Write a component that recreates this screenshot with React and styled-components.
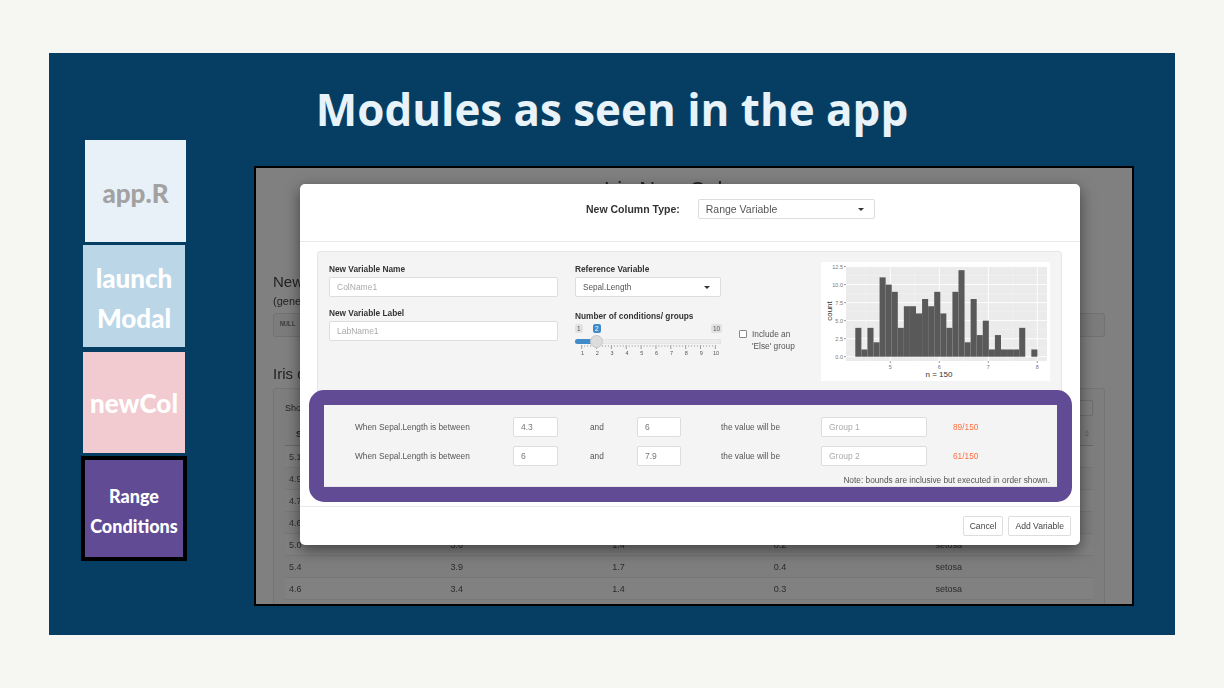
import React from "react";
import styled, { createGlobalStyle } from "styled-components";

const GlobalStyle = createGlobalStyle`
  html, body {
    margin: 0;
    padding: 0;
    background: #f6f7f2;
    font-family: "Liberation Sans", Arial, sans-serif;
  }
`;

// the first rows only show their first cell, the rest sits behind the modal
const tableRows = [
  ["5.1"],
  ["4.9"],
  ["4.7"],
  ["4.6"],
  ["5.0", "3.6", "1.4", "0.2", "setosa"],
  ["5.4", "3.9", "1.7", "0.4", "setosa"],
  ["4.6", "3.4", "1.4", "0.3", "setosa"],
];

const bins = [4, 1, 4, 2, 11, 10, 9, 4, 7, 7, 6, 8, 7, 9, 6, 4, 9, 12, 2, 8, 3, 5, 1, 3, 1, 1, 1, 4, 0, 1];

const Histogram = () => {
  const y0 = 94.7;
  const unit = 7.21;
  const binW = 6.07;
  const x5 = 69.3;
  const xUnit = 49;
  return (
    <svg width="229" height="119" viewBox="0 0 229 119">
      <rect width="229" height="119" fill="#fff" />
      <rect x="25" y="4.5" width="201" height="94.5" fill="#ebebeb" />
      {[1.25, 3.75, 6.25, 8.75, 11.25].map((v) => (
        <line key={v} x1="25" x2="226" y1={y0 - v * unit} y2={y0 - v * unit} stroke="#f3f3f3" strokeWidth="0.6" />
      ))}
      {[-0.5, 0.5, 1.5, 2.5].map((v) => (
        <line key={v} y1="4.5" y2="99" x1={x5 + v * xUnit} x2={x5 + v * xUnit} stroke="#f3f3f3" strokeWidth="0.6" />
      ))}
      {[0, 2.5, 5, 7.5, 10, 12.5].map((v) => (
        <g key={v}>
          <line x1="25" x2="226" y1={y0 - v * unit} y2={y0 - v * unit} stroke="#fff" strokeWidth="0.9" />
          <line x1="23" x2="25" y1={y0 - v * unit} y2={y0 - v * unit} stroke="#555" strokeWidth="0.6" />
          <text x="22" y={y0 - v * unit + 2} fontSize="5.5" fill="#777" textAnchor="end">
            {v.toFixed(1)}
          </text>
        </g>
      ))}
      {[0, 1, 2, 3].map((v) => (
        <g key={v}>
          <line y1="4.5" y2="99" x1={x5 + v * xUnit} x2={x5 + v * xUnit} stroke="#fff" strokeWidth="0.9" />
          <line y1="99" y2="101" x1={x5 + v * xUnit} x2={x5 + v * xUnit} stroke="#555" strokeWidth="0.6" />
          <text x={x5 + v * xUnit} y="107" fontSize="5.5" fill="#777" textAnchor="middle">
            {v + 5}
          </text>
        </g>
      ))}
      {bins.map((n, i) => (
        <rect key={i} x={34.3 + i * binW} y={y0 - n * unit} width={binW} height={n * unit} fill="#595959" />
      ))}
      <text x="118" y="115" fontSize="8" fill="#333" textAnchor="middle">
        n = 150
      </text>
      <text transform="translate(11 49) rotate(-90)" fontSize="8" fill="#333" textAnchor="middle">
        count
      </text>
    </svg>
  );
};

const SliderTicks = () => {
  const step = 14.85;
  return (
    <svg width="146" height="10" viewBox="0 0 146 10">
      {Array.from({ length: 46 }, (_, i) => {
        const major = i % 5 === 0;
        const x = 6.7 + (i * step) / 5;
        return <line key={i} x1={x} x2={x} y1="0" y2={major ? 4 : 2} stroke={major ? "#777" : "#aaa"} strokeWidth="0.7" />;
      })}
    </svg>
  );
};

const Slide = styled.div`
  box-sizing: border-box;
  width: 1126px;
  height: 582px;
  margin: 53px 0 0 49px;
  background: #053e62;
  overflow: hidden;
`;

const SlideTitle = styled.h1`
  height: 87px;
  margin: 0;
  padding-top: 26px;
  box-sizing: border-box;
  text-align: center;
  color: #e8f2f9;
  font: 700 43.9px/60px "Open Sans", sans-serif;
`;

const SlideBody = styled.div`
  display: flex;
  align-items: flex-start;
  padding-left: 32px;
  gap: 67px;
`;

const Sidebar = styled.div`
  display: flex;
  flex-direction: column;
  width: 106px;
`;

const Tile = styled.div`
  box-sizing: border-box;
  display: flex;
  flex-direction: column;
  justify-content: center;
  align-items: center;
  padding-top: ${(p) => p.$nudge || 0}px;
  width: ${(p) => p.$w}px;
  height: ${(p) => p.$h}px;
  margin-left: ${(p) => p.$left}px;
  margin-top: ${(p) => p.$top}px;
  background: ${(p) => p.$bg};
  color: ${(p) => p.$color || "#fff"};
  border: ${(p) => (p.$active ? "4px solid #000" : "none")};
  font: 900 ${(p) => p.$size || 26}px/${(p) => p.$line || 40}px Lato, sans-serif;
`;

const ShotWindow = styled.div`
  position: relative;
  box-sizing: border-box;
  flex: none;
  width: 880px;
  height: 440px;
  margin-top: 26px;
  border: 2px solid #000;
  overflow: hidden;
  background: #808080;
`;

const Shot = styled.div`
  position: relative;
  width: 100%;
  height: 100%;
  filter: blur(0.35px);
`;

const BackPage = styled.div`
  box-sizing: border-box;
  height: 100%;
  padding: 0 27px 0 17px;
  color: #222;
`;

const BackTitle = styled.div`
  height: 96px;
  padding: 9px 52px 0 0;
  box-sizing: border-box;
  text-align: center;
  font-size: 22px;
  line-height: 26px;
`;

const BackHeading = styled.div`
  font-size: 15px;
  line-height: 20px;
  margin-top: ${(p) => p.$top || 0}px;
`;

const BackNote = styled.div`
  font-size: 11px;
  line-height: 18px;
  margin-bottom: 3px;
`;

const NullBox = styled.div`
  box-sizing: border-box;
  height: 24px;
  padding: 0 6px;
  margin-bottom: 27px;
  background: #7c7c7c;
  border: 1px solid #727272;
  border-radius: 3px;
  font: 6.5px/22px "Liberation Mono", monospace;
`;

const TablePanel = styled.div`
  box-sizing: border-box;
  height: 240px;
  margin-top: 4px;
  padding: 11px 11px;
  background: #7e7e7e;
  border: 1px solid #747474;
  border-radius: 3px;
  font-size: 9px;
`;

const TableTop = styled.div`
  display: flex;
  justify-content: space-between;
  align-items: center;
  height: 16px;
`;

const SearchBox = styled.div`
  width: 80px;
  height: 16px;
  box-sizing: border-box;
  border: 1px solid #6e6e6e;
  border-radius: 2px;
  background: #808080;
`;

const TableHead = styled.div`
  display: flex;
  box-sizing: border-box;
  justify-content: space-between;
  align-items: center;
  height: 30px;
  padding: 6px 4px 0 11px;
  border-bottom: 1px solid #6a6a6a;
  font-weight: 700;
  color: #222;
`;

const SortIcon = styled.span`
  display: flex;
  flex-direction: column;
  gap: 1px;
  &::before,
  &::after {
    content: "";
    border-left: 2.5px solid transparent;
    border-right: 2.5px solid transparent;
  }
  &::before {
    border-bottom: 3px solid #6a6a6a;
  }
  &::after {
    border-top: 3px solid #6a6a6a;
  }
`;

const TableRow = styled.div`
  display: grid;
  grid-template-columns: repeat(5, 1fr);
  height: 22px;
  box-sizing: border-box;
  padding-top: 5px;
  line-height: 12px;
  border-bottom: 1px solid #777;
  background: ${(p) => (p.$odd ? "#818181" : "#7e7e7e")};
  color: #2c2c2c;
  span {
    padding-left: 4px;
  }
`;

const Modal = styled.div`
  position: absolute;
  left: 44px;
  top: 16px;
  width: 780px;
  height: 361px;
  display: flex;
  flex-direction: column;
  background: #fff;
  border-radius: 5px;
  box-shadow: 0 5px 15px rgba(0, 0, 0, 0.5);
  color: #333;
  font-size: 8.3px;
`;

const ModalHeader = styled.div`
  flex: none;
  box-sizing: border-box;
  height: 58px;
  padding: 15px 0 0 286px;
  display: flex;
  gap: 18px;
  align-items: flex-start;
  border-bottom: 1px solid #e8e8e8;
`;

const HeaderLabel = styled.div`
  font-size: 10.5px;
  font-weight: 700;
  line-height: 20px;
`;

const Select = styled.div`
  box-sizing: border-box;
  width: ${(p) => p.$w}px;
  height: 20px;
  display: flex;
  align-items: center;
  justify-content: space-between;
  padding: 0 10px 0 7px;
  background: #fff;
  border: 1px solid #ddd;
  border-radius: 2px;
  color: #555;
  font-size: ${(p) => p.$size || 8.2}px;
  &::after {
    content: "";
    border-left: 3px solid transparent;
    border-right: 3px solid transparent;
    border-top: 3px solid #333;
  }
`;

const ModalBody = styled.div`
  flex: 1;
  box-sizing: border-box;
  padding: 9px 18px 0 17px;
  border-bottom: 1px solid #e8e8e8;
`;

const Well = styled.div`
  box-sizing: border-box;
  height: 236px;
  padding: 10px 11px 0;
  background: #f4f4f4;
  border: 1px solid #e6e6e6;
  border-radius: 3px;
`;

const TopGrid = styled.div`
  display: flex;
  height: 155px;
`;

const NameColumn = styled.div`
  width: 229px;
  margin-right: 17px;
`;

const RefColumn = styled.div`
  width: 146px;
  margin-right: 18px;
`;

const ElseColumn = styled.div`
  display: flex;
  align-items: flex-start;
  gap: 5px;
  width: 82px;
  padding-top: 66px;
  box-sizing: border-box;
  color: #555;
  line-height: 12px;
`;

const PlotColumn = styled.div`
  svg {
    display: block;
  }
`;

const FieldLabel = styled.div`
  font-weight: 700;
  line-height: 14px;
  height: 15px;
  color: #333;
  margin-top: ${(p) => p.$top || 0}px;
`;

const TextInput = styled.input`
  display: block;
  box-sizing: border-box;
  width: ${(p) => p.$w || "100%"};
  height: 20px;
  margin-bottom: ${(p) => p.$bottom || 0}px;
  padding: 0 7px;
  background: #fff;
  border: 1px solid #ddd;
  border-radius: 2px;
  font: 8.5px "Liberation Sans", Arial, sans-serif;
  color: #777;
  &::placeholder {
    color: #aaa;
    opacity: 1;
  }
`;

const Box = styled.span`
  flex: none;
  width: 8px;
  height: 8px;
  box-sizing: border-box;
  margin-top: 2px;
  background: #fff;
  border: 1px solid #888;
  border-radius: 1px;
`;

const SliderWrap = styled.div`
  position: relative;
  height: 44px;
`;

const SliderBadge = styled.span`
  position: absolute;
  top: 0;
  left: ${(p) => p.$left}px;
  padding: 0 2px;
  height: 9px;
  line-height: 9px;
  font-size: 6.5px;
  border-radius: 2px;
  background: ${(p) => (p.$on ? "#428bca" : "#e2e2e2")};
  color: ${(p) => (p.$on ? "#fff" : "#555")};
`;

const SliderTrack = styled.div`
  position: absolute;
  left: 0;
  right: 0;
  top: 15px;
  height: 5px;
  background: #ececec;
  border-radius: 3px;
  box-shadow: inset 0 0 1px #bbb;
`;

const SliderFill = styled.div`
  height: 100%;
  background: #428bca;
  border-radius: 3px 0 0 3px;
`;

const SliderThumb = styled.div`
  position: absolute;
  top: 11px;
  left: 15px;
  width: 13px;
  height: 13px;
  box-sizing: border-box;
  border-radius: 50%;
  background: #dcdcdc;
  border: 1px solid #c8c8c8;
`;

const SliderTickRow = styled.div`
  position: absolute;
  left: 0;
  top: 21px;
  svg {
    display: block;
  }
`;

const SliderNums = styled.div`
  position: absolute;
  left: 0;
  top: 26px;
  width: 146px;
  font-size: 5.5px;
  color: #555;
  display: grid;
  grid-template-columns: repeat(10, 14.85px);
  justify-content: start;
  text-align: center;
`;

const CondRow = styled.div`
  display: flex;
  align-items: center;
  height: 20px;
  margin-bottom: 9px;
  color: #555;
`;

const CondText = styled.div`
  flex: none;
  width: ${(p) => p.$w}px;
  padding-left: ${(p) => p.$pad || 0}px;
  box-sizing: border-box;
`;

const CountText = styled.div`
  color: #ff7043;
  margin-left: 26px;
`;

const Note = styled.div`
  text-align: right;
  color: #555;
  line-height: 10px;
`;

const ModalFooter = styled.div`
  flex: none;
  height: 38px;
  box-sizing: border-box;
  display: flex;
  justify-content: flex-end;
  align-items: flex-start;
  gap: 5px;
  padding: 9px 9px 0 0;
`;

const FooterButton = styled.div`
  box-sizing: border-box;
  height: 20px;
  padding: 0 6px;
  font-size: 8.6px;
  line-height: 18px;
  border: 1px solid #ddd;
  border-radius: 2px;
  background: #fff;
  color: #444;
`;

const HighlightRing = styled.div`
  position: absolute;
  left: 53px;
  top: 222px;
  width: 763px;
  height: 112px;
  box-sizing: border-box;
  border: 15px solid #614b94;
  border-radius: 15px;
  pointer-events: none;
`;

const conditions = [
  { low: "4.3", high: "6", group: "Group 1", count: "89/150" },
  { low: "6", high: "7.9", group: "Group 2", count: "61/150" },
];

const App = () => (
  <>
    <GlobalStyle />
    <Slide>
      <SlideTitle>Modules as seen in the app</SlideTitle>
      <SlideBody>
        <Sidebar>
          <Tile $w={101} $h={102} $left={4} $top={0} $bg="#e9f1f8" $color="#a2a2a2" $nudge={4}>
            app.R
          </Tile>
          <Tile $w={102} $h={102} $left={2} $top={3} $bg="#bad6e7" $nudge={4}>
            <div>launch</div>
            <div>Modal</div>
          </Tile>
          <Tile $w={102} $h={101} $left={2} $top={5} $bg="#f2cbd0" $nudge={1}>
            newCol
          </Tile>
          <Tile $w={106} $h={105} $left={0} $top={3} $bg="#614b94" $active $size={18} $line={30} $nudge={4}>
            <div>Range</div>
            <div>Conditions</div>
          </Tile>
        </Sidebar>

        <ShotWindow>
          <Shot>
            <BackPage>
              <BackTitle>Iris New Col</BackTitle>
              <BackHeading $top={8}>New Variable</BackHeading>
              <BackNote>(generated)</BackNote>
              <NullBox>NULL</NullBox>
              <BackHeading>Iris data</BackHeading>
              <TablePanel>
                <TableTop>
                  <span>Show</span>
                  <SearchBox />
                </TableTop>
                <TableHead>
                  <span>S</span>
                  <SortIcon />
                </TableHead>
                {tableRows.map((row, i) => (
                  <TableRow key={i} $odd={i % 2 === 0}>
                    {row.map((cell, j) => (
                      <span key={j}>{cell}</span>
                    ))}
                  </TableRow>
                ))}
              </TablePanel>
            </BackPage>

            <Modal>
              <ModalHeader>
                <HeaderLabel>New Column Type:</HeaderLabel>
                <Select $w={177} $size={10.5}>
                  Range Variable
                </Select>
              </ModalHeader>
              <ModalBody>
                <Well>
                  <TopGrid>
                    <NameColumn>
                      <FieldLabel>New Variable Name</FieldLabel>
                      <TextInput placeholder="ColName1" readOnly $bottom={9} />
                      <FieldLabel>New Variable Label</FieldLabel>
                      <TextInput placeholder="LabName1" readOnly />
                    </NameColumn>
                    <RefColumn>
                      <FieldLabel>Reference Variable</FieldLabel>
                      <Select $w={146}>Sepal.Length</Select>
                      <FieldLabel $top={12}>Number of conditions/ groups</FieldLabel>
                      <SliderWrap>
                        <SliderBadge $left={0}>1</SliderBadge>
                        <SliderBadge $left={18} $on>
                          2
                        </SliderBadge>
                        <SliderBadge $left={136}>10</SliderBadge>
                        <SliderTrack>
                          <SliderFill style={{ width: `${(21 / 146) * 100}%` }} />
                        </SliderTrack>
                        <SliderTickRow>
                          <SliderTicks />
                        </SliderTickRow>
                        <SliderThumb />
                        <SliderNums>
                          {[1, 2, 3, 4, 5, 6, 7, 8, 9, 10].map((n) => (
                            <span key={n}>{n}</span>
                          ))}
                        </SliderNums>
                      </SliderWrap>
                    </RefColumn>
                    <ElseColumn>
                      <Box />
                      <div>
                        Include an
                        <br />
                        'Else' group
                      </div>
                    </ElseColumn>
                    <PlotColumn>
                      <Histogram />
                    </PlotColumn>
                  </TopGrid>
                  {conditions.map((c) => (
                    <CondRow key={c.group}>
                      <CondText $w={184} $pad={26}>
                        When Sepal.Length is between
                      </CondText>
                      <TextInput defaultValue={c.low} readOnly $w="45px" />
                      <CondText $w={79} $pad={32}>
                        and
                      </CondText>
                      <TextInput defaultValue={c.high} readOnly $w="44px" />
                      <CondText $w={140} $pad={40}>
                        the value will be
                      </CondText>
                      <TextInput placeholder={c.group} readOnly $w="106px" />
                      <CountText>{c.count}</CountText>
                    </CondRow>
                  ))}
                  <Note>Note: bounds are inclusive but executed in order shown.</Note>
                </Well>
              </ModalBody>
              <ModalFooter>
                <FooterButton>Cancel</FooterButton>
                <FooterButton>Add Variable</FooterButton>
              </ModalFooter>
            </Modal>
          </Shot>
          <HighlightRing />
        </ShotWindow>
      </SlideBody>
    </Slide>
  </>
);

export default App;
